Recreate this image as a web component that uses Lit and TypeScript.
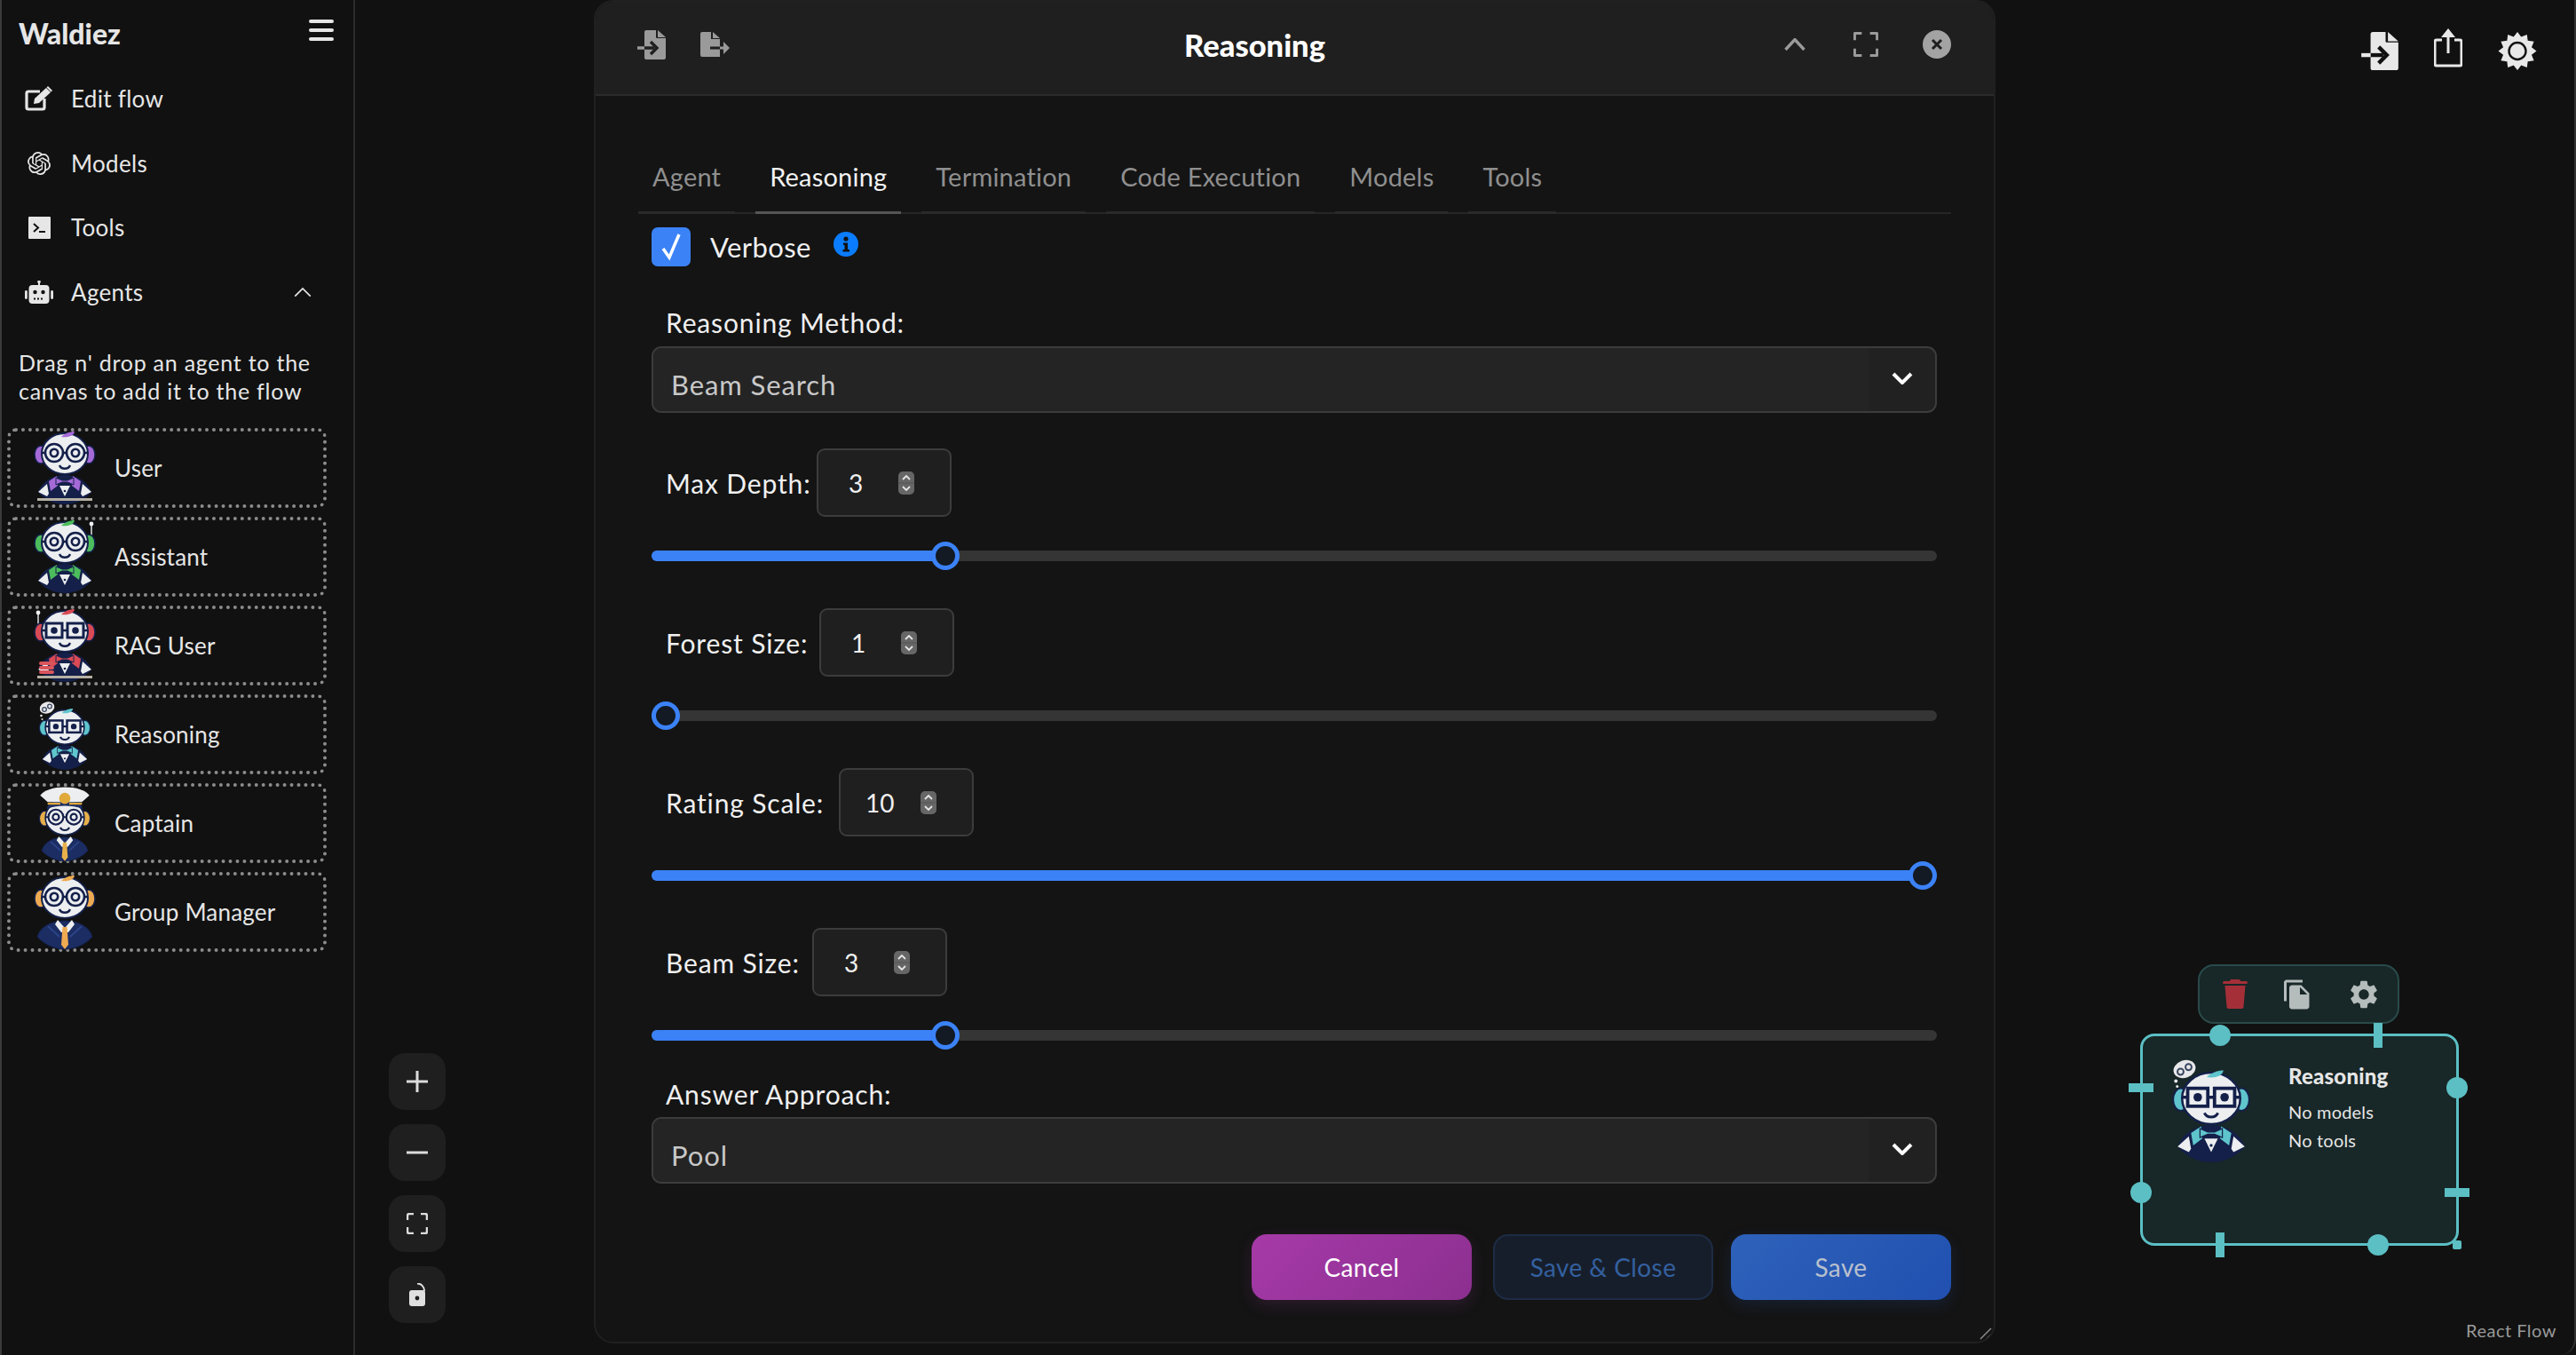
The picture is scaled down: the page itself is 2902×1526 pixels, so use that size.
import { LitElement, html, css, svg } from "lit";
import { customElement } from "lit/decorators.js";

const NAVY = "#14204a";

const gearPath = "M19.14 12.94c.04-.3.06-.61.06-.94 0-.32-.02-.64-.07-.94l2.03-1.58c.18-.14.23-.41.12-.61l-1.92-3.32c-.12-.22-.37-.29-.59-.22l-2.39.96c-.5-.38-1.03-.7-1.62-.94l-.36-2.54c-.04-.24-.24-.41-.48-.41h-3.84c-.24 0-.43.17-.47.41l-.36 2.54c-.59.24-1.13.57-1.62.94l-2.39-.96c-.22-.08-.47 0-.59.22L2.74 8.87c-.12.21-.08.47.12.61l2.03 1.58c-.05.3-.09.63-.09.94s.02.64.07.94l-2.03 1.58c-.18.14-.23.41-.12.61l1.92 3.32c.12.22.37.29.59.22l2.39-.96c.5.38 1.03.7 1.62.94l.36 2.54c.05.24.24.41.48.41h3.84c.24 0 .44-.17.47-.41l.36-2.54c.59-.24 1.13-.56 1.62-.94l2.39.96c.22.08.47 0 .59-.22l1.92-3.32c.12-.22.07-.47-.12-.61l-2.01-1.58zM12 15.6c-1.98 0-3.6-1.62-3.6-3.6s1.62-3.6 3.6-3.6 3.6 1.62 3.6 3.6-1.62 3.6-3.6 3.6z";
const openaiPath = "M22.2819 9.8211a5.9847 5.9847 0 0 0-.5157-4.9108 6.0462 6.0462 0 0 0-6.5098-2.9A6.0651 6.0651 0 0 0 4.9807 4.1818a5.9847 5.9847 0 0 0-3.9977 2.9 6.0462 6.0462 0 0 0 .7427 7.0966 5.98 5.98 0 0 0 .511 4.9107 6.051 6.051 0 0 0 6.5146 2.9001A5.9847 5.9847 0 0 0 13.2599 24a6.0557 6.0557 0 0 0 5.7718-4.2058 5.9894 5.9894 0 0 0 3.9977-2.9001 6.0557 6.0557 0 0 0-.7475-7.0729zm-9.022 12.6081a4.4755 4.4755 0 0 1-2.8764-1.0408l.1419-.0804 4.7783-2.7582a.7948.7948 0 0 0 .3927-.6813v-6.7369l2.02 1.1686a.071.071 0 0 1 .038.052v5.5826a4.504 4.504 0 0 1-4.4945 4.4944zm-9.6607-4.1254a4.4708 4.4708 0 0 1-.5346-3.0137l.142.0852 4.783 2.7582a.7712.7712 0 0 0 .7806 0l5.8428-3.3685v2.3324a.0804.0804 0 0 1-.0332.0615L9.74 19.9502a4.4992 4.4992 0 0 1-6.1408-1.6464zM2.3408 7.8956a4.485 4.485 0 0 1 2.3655-1.9728V11.6a.7664.7664 0 0 0 .3879.6765l5.8144 3.3543-2.0201 1.1685a.0757.0757 0 0 1-.071 0l-4.8303-2.7865A4.504 4.504 0 0 1 2.3408 7.872zm16.5963 3.8558L13.1038 8.364 15.1192 7.2a.0757.0757 0 0 1 .071 0l4.8303 2.7913a4.4944 4.4944 0 0 1-.6765 8.1042v-5.6772a.79.79 0 0 0-.407-.667zm2.0107-3.0231l-.142-.0852-4.7735-2.7818a.7759.7759 0 0 0-.7854 0L9.409 9.2297V6.8974a.0662.0662 0 0 1 .0284-.0615l4.8303-2.7866a4.4992 4.4992 0 0 1 6.6802 4.66zM8.3065 12.863l-2.02-1.1638a.0804.0804 0 0 1-.038-.0567V6.0742a4.4992 4.4992 0 0 1 7.3757-3.4537l-.142.0805L8.704 5.459a.7948.7948 0 0 0-.3927.6813zm1.0976-2.3654l2.602-1.4998 2.6069 1.4998v2.9994l-2.5974 1.4997-2.6067-1.4997Z";

// file with an arrow coming in from the left
const fileIn = (w: number, h: number, c: string, bg: string) => html`
  <svg width=${w} height=${h} viewBox="0 0 32 33">
    <path d="M8 2a2 2 0 0 1 2-2h11v8a1 1 0 0 0 1 1h10v22a2 2 0 0 1-2 2H10a2 2 0 0 1-2-2z" fill=${c} />
    <path d="M23 0l9 8h-9z" fill=${c} />
    <path d="M8 20h11" stroke=${bg} stroke-width="3.4" />
    <path d="M0 20h8" stroke=${c} stroke-width="3.4" />
    <path d="M15 13l7 7-7 7" fill="none" stroke=${bg} stroke-width="3.4" />
  </svg>`;

const fileOut = (c: string, bg: string) => html`
  <svg width="33" height="28" viewBox="0 0 33 28">
    <path d="M0 2a2 2 0 0 1 2-2h10v8h10v20H2a2 2 0 0 1-2-2z" fill=${c} />
    <path d="M14 0l8 7h-8z" fill=${c} />
    <path d="M11 18h11" stroke=${bg} stroke-width="3" />
    <path d="M22 18h7" stroke=${c} stroke-width="3" />
    <path d="M26 11l7 7-7 7z" fill=${c} />
  </svg>`;

const corners = (s: number, c: string, sw: number) => html`
  <svg width=${s} height=${s} viewBox="0 0 24 24" fill="none" stroke=${c} stroke-width=${sw}>
    <path d="M1 8V3a2 2 0 0 1 2-2h5M16 1h5a2 2 0 0 1 2 2v5M23 16v5a2 2 0 0 1-2 2h-5M8 23H3a2 2 0 0 1-2-2v-5" />
  </svg>`;

const chevron = (w: number, h: number, path: string, c: string, sw: number) => html`
  <svg width=${w} height=${h} viewBox="0 0 24 14" fill="none" stroke=${c} stroke-width=${sw}>
    <path d=${path} />
  </svg>`;

function sunIcon() {
  const pts: string[] = [];
  for (let i = 0; i < 24; i++) {
    const r = i % 2 === 0 ? 21.5 : 16.5;
    const a = (i * Math.PI) / 12;
    pts.push(`${22 + r * Math.sin(a)},${21.5 - r * Math.cos(a)}`);
  }
  return html`<svg width="44" height="43" viewBox="0 0 44 43">
    <polygon points=${pts.join(" ")} fill="#e8e8e8" />
    <circle cx="22" cy="21.5" r="9.5" fill="#e8e8e8" stroke="#111" stroke-width="2.4" />
  </svg>`;
}

interface AvatarOpts {
  ear: string;
  square?: boolean;
  antenna?: "left" | "right";
  bubble?: boolean;
  hat?: boolean;
  suit?: boolean;
  bar?: boolean;
  db?: boolean;
  small?: boolean;
}

// little robot mascot, 80 units square
function avatar(o: AvatarOpts, size = 80) {
  const s = o.small ? 0.84 : 1;
  const cy = o.hat ? 34 : o.small ? 32 : 24;
  const face = "#eceef0";
  const glasses = o.square
    ? svg`<path d="M-26 -1h52" stroke=${NAVY} stroke-width="2.6" />
          <rect x="-21" y="-9" width="18" height="16" fill=${face} stroke=${NAVY} stroke-width="3" />
          <rect x="3" y="-9" width="18" height="16" fill=${face} stroke=${NAVY} stroke-width="3" />
          <circle cx="-12" cy="-1" r="3.8" fill=${NAVY} /><circle cx="12" cy="-1" r="3.8" fill=${NAVY} />`
    : svg`<path d="M-26 -1h52" stroke=${NAVY} stroke-width="2.4" />
          <circle cx="-12" cy="-1" r="10" fill=${face} stroke=${NAVY} stroke-width="2.6" />
          <circle cx="12" cy="-1" r="10" fill=${face} stroke=${NAVY} stroke-width="2.6" />
          <circle cx="-12" cy="-1" r="4.2" fill=${face} stroke=${NAVY} stroke-width="2.6" />
          <circle cx="12" cy="-1" r="4.2" fill=${face} stroke=${NAVY} stroke-width="2.6" />`;
  const body = o.suit
    ? svg`<path d="M-31 44c3-11 15-18 31-18s28 7 31 18c-8 9-20 14-31 14s-23-5-31-14z" fill="#1b2d63" stroke=${NAVY} stroke-width="1" />
          <path d="M-19 32l13 12M19 32l-13 12" stroke="#2c4488" stroke-width="2" />
          <path d="M-8 25l8 9 8-9 3 5-7 9h-8l-7-9z" fill=${face} />
          <path d="M-2.500 33h5l1.500 20-4 5-4-5z" fill=${o.ear} />`
    : svg`<path d="M-30 43c4-11 15-19 30-19s26 8 30 19c-7 9-18 14-30 14s-23-5-30-14z" fill=${NAVY} />
          <path d="M-30 43l10-9 2 11-2 3z" fill=${face} />
          <path d="M30 43l-10-9-2 11 2 3z" fill=${face} />
          <path d="M-18 31l9-6 1 11-8 6zM18 31l-9-6-1 11 8 6z" fill=${o.ear} />
          <path d="M-6 36h12l-6 12z" fill=${face} />
          <circle cx="0" cy="42" r="1.300" fill=${NAVY} />
          <path d="M-10 27l7 3h6l7-3v8l-7-3h-6l-7 3z" fill=${o.ear} stroke=${NAVY} stroke-width="1" />`;
  return html`<svg class="avatar" width=${size} height=${size} viewBox="0 0 80 80">
    ${o.bubble
      ? svg`<g fill="#e8e8ea"><ellipse cx="20" cy="10" rx="8.500" ry="6.500" transform="rotate(-20 20 10)" />
          <circle cx="13.500" cy="19" r="1.300" /><circle cx="14.500" cy="23" r="1" /></g>
          <g fill="none" stroke="#39465f" stroke-width="1.300"><circle cx="17" cy="12" r="2.300" /><circle cx="23" cy="8.500" r="2.300" /></g>`
      : ""}
    <g transform="translate(40 ${cy}) scale(${s})">
      ${o.antenna
        ? svg`<path d="M${o.antenna === "left" ? -30 : 30} -6v-13" stroke="#eef0f2" stroke-width="1.400" />
              <circle cx=${o.antenna === "left" ? -30 : 30} cy="-21" r="2.400" fill="#eef0f2" />`
        : ""}
      ${body}
      <ellipse cx="-27" cy="1" rx="7" ry="10" fill=${o.ear} stroke=${NAVY} stroke-width="1.500" />
      <ellipse cx="27" cy="1" rx="7" ry="10" fill=${o.ear} stroke=${NAVY} stroke-width="1.500" />
      <ellipse cx="0" cy="0" rx="26" ry="23" fill=${face} stroke=${NAVY} stroke-width="2" />
      <path d="M-4 -19c4-4 10-6 15-6-1 5-7 7-15 6z" fill=${o.ear} />
      ${glasses}
      <path d="M-6 13c2 5 10 5 12 0" fill="none" stroke=${NAVY} stroke-width="2.400" />
      ${o.hat
        ? svg`<path d="M-24 -12c0-8 11-11 24-11s24 3 24 11c-8-3-16-4-24-4s-16 1-24 4z" fill="#1b2d63" />
              <path d="M-33 -30c5-7 18-11 33-11s28 4 33 11l-10 9h-46z" fill=${face} />
              <path d="M-23 -19h17M6 -19h17" stroke="#e0a93a" stroke-width="2.600" />
              <circle cx="0" cy="-26" r="7.500" fill="#e0a93a" />`
        : ""}
    </g>
    ${o.bar ? svg`<rect x="9" y="74" width="62" height="3" fill="#b5b0a4" />` : ""}
    ${o.db
      ? svg`<g fill="#d9555c"><rect x="11" y="58" width="17" height="4" rx="2" /><rect x="11" y="63" width="17" height="4" rx="2" /><rect x="11" y="68" width="17" height="4" rx="2" /></g>`
      : ""}
  </svg>`;
}

const reasoningAvatar: AvatarOpts = { ear: "#5fc5cc", square: true, bubble: true, small: true };

const agents: { name: string; opts: AvatarOpts }[] = [
  { name: "User", opts: { ear: "#a56ad8", bar: true } },
  { name: "Assistant", opts: { ear: "#4cbc5c", antenna: "right" } },
  { name: "RAG User", opts: { ear: "#d94a55", square: true, antenna: "left", bar: true, db: true } },
  { name: "Reasoning", opts: reasoningAvatar },
  { name: "Captain", opts: { ear: "#e8b04a", hat: true, suit: true, small: true } },
  { name: "Group Manager", opts: { ear: "#eeaa50", suit: true } },
];

const navIcons = [
  {
    label: "Edit flow",
    icon: html`<svg width="32" height="28" viewBox="0 0 32 28">
      <path d="M17 6H4a2 2 0 0 0-2 2v16a2 2 0 0 0 2 2h16a2 2 0 0 0 2-2V14" fill="none" stroke="#e6e6e6" stroke-width="3.200" />
      <path d="M10 20l1-6L24 2l5 5-13 12z" fill="#e6e6e6" />
      <path d="M26 0l5 5-1.500 1.500-5-5z" fill="#e6e6e6" />
    </svg>`,
  },
  {
    label: "Models",
    icon: html`<svg width="26" height="26" viewBox="0 0 24 24" fill="#e6e6e6"><path d=${openaiPath} /></svg>`,
  },
  {
    label: "Tools",
    icon: html`<svg width="25" height="25" viewBox="0 0 25 25">
      <rect width="25" height="25" rx="1" fill="#e6e6e6" />
      <path d="M6 8l5 4.500-5 4.500" fill="none" stroke="#111" stroke-width="2" />
      <path d="M12 17h7" stroke="#111" stroke-width="2" />
    </svg>`,
  },
];

const sliders = [
  { label: "Max Depth:", value: 3, labelWidth: 186 },
  { label: "Forest Size:", value: 1, labelWidth: 189 },
  { label: "Rating Scale:", value: 10, labelWidth: 211 },
  { label: "Beam Size:", value: 3, labelWidth: 181 },
];

const tabs = ["Agent", "Reasoning", "Termination", "Code Execution", "Models", "Tools"];

@customElement("app-root")
export class AppRoot extends LitElement {
  static styles = css`
    :host {
      display: block;
      width: 100%;
      height: 1526px;
      overflow: hidden;
      font-family: Lato, "Noto Sans", sans-serif;
      color: #e6e6e6;
      background: #111;
    }
    .app {
      display: grid;
      grid-template-columns: 398px 1fr;
      height: 1526px;
      box-sizing: border-box;
      border-left: 2px solid #3a3a3a;
      border-right: 2px solid #333;
      border-bottom-right-radius: 18px;
      background: #111;
    }

    /* sidebar */
    .sidebar {
      display: flex;
      flex-direction: column;
      border-right: 2px solid #2c2c2c;
    }
    .brand {
      display: flex;
      justify-content: space-between;
      align-items: flex-start;
      height: 75px;
      padding: 0 22px 0 19px;
    }
    .brand h1 {
      margin: 20px 0 0;
      font-size: 32px;
      font-weight: 900;
      line-height: 36px;
    }
    .burger {
      display: flex;
      flex-direction: column;
      gap: 6px;
      margin-top: 22px;
      width: 28px;
    }
    .burger i {
      height: 4px;
      border-radius: 2px;
      background: #e6e6e6;
    }
    .nav {
      display: grid;
      grid-auto-rows: 72.6px;
    }
    .nav-row {
      display: grid;
      grid-template-columns: 32px 1fr;
      column-gap: 20px;
      align-items: center;
      justify-items: center;
      padding: 0 47px 0 26px;
      font-size: 26px;
    }
    .nav-row span {
      justify-self: start;
      letter-spacing: 0.3px;
    }
    .agents-row {
      display: flex;
      justify-content: space-between;
      align-items: center;
      width: 100%;
    }
    .hint {
      margin: 27px 0 26px;
      padding: 0 6px 0 19px;
      font-size: 25px;
      line-height: 32px;
      letter-spacing: 0.75px;
    }
    .cards {
      display: flex;
      flex-direction: column;
      gap: 10px;
      padding-left: 6px;
    }
    .card {
      display: flex;
      align-items: center;
      width: 360px;
      height: 90px;
      box-sizing: border-box;
      padding-left: 21px;
      gap: 16px;
      border: 4px dotted #8c8c8c;
      border-radius: 10px;
      font-size: 26px;
      letter-spacing: 0.2px;
    }
    .avatar {
      flex: none;
      overflow: visible;
    }

    /* canvas */
    .canvas {
      position: relative;
    }
    .controls {
      position: absolute;
      left: 38px;
      top: 1186px;
      display: flex;
      flex-direction: column;
      gap: 16px;
    }
    .control {
      display: flex;
      align-items: center;
      justify-content: center;
      width: 64px;
      height: 64px;
      border-radius: 18px;
      background: #1f1f1f;
    }
    .page-actions {
      position: absolute;
      top: 32px;
      right: 42px;
      display: flex;
      align-items: flex-start;
      gap: 40px;
    }
    .page-actions > svg:first-child,
    .page-actions > svg:last-child {
      margin-top: 4px;
    }
    .attribution {
      position: absolute;
      right: 20px;
      top: 1486px;
      font-size: 20px;
      line-height: 24px;
      color: #999;
      letter-spacing: 0.5px;
    }

    /* modal */
    .modal {
      position: absolute;
      left: 269px;
      top: 0;
      width: 1579px;
      height: 1513px;
      box-sizing: border-box;
      display: flex;
      flex-direction: column;
      border: 2px solid #202020;
      border-radius: 22px;
      background: #141414;
      overflow: hidden;
    }
    .modal-head {
      flex: none;
      display: grid;
      grid-template-columns: 616px auto 1fr;
      align-items: center;
      height: 106px;
      padding: 0 48px 8px 47px;
      box-sizing: border-box;
      background: #1f1f1f;
      border-bottom: 2px solid #2c2c2c;
    }
    .head-left {
      display: flex;
      align-items: center;
      gap: 39px;
    }
    .head-right {
      display: flex;
      justify-content: flex-end;
      align-items: center;
      gap: 50px;
    }
    .head-right > svg:first-child {
      margin-right: 4px;
    }
    .modal-head h2 {
      margin: 0;
      font-size: 34.5px;
      font-weight: 900;
      color: #fff;
    }
    .close {
      display: flex;
      align-items: center;
      justify-content: center;
      width: 32px;
      height: 32px;
      border-radius: 50%;
      background: #a3a3a3;
    }
    .modal-body {
      display: flex;
      flex-direction: column;
      padding: 0 48px;
    }
    .tabs {
      display: flex;
      gap: 23px;
      margin-top: 70px;
      border-bottom: 2px solid #262626;
    }
    .tab {
      padding: 0 16px;
      height: 63px;
      box-sizing: border-box;
      font-size: 29px;
      line-height: 42px;
      color: #8f8f8f;
      border-bottom: 3px solid #2a2a2a;
      margin-bottom: -2px;
      letter-spacing: 0.2px;
    }
    .tab.active {
      color: #f2f2f2;
      border-bottom-color: #555;
    }
    .form {
      display: flex;
      flex-direction: column;
      padding: 0 16px 0 15px;
    }
    .verbose {
      display: flex;
      align-items: center;
      height: 44px;
      margin-top: 15px;
      font-size: 31px;
      letter-spacing: 0.4px;
      color: #f0f0f0;
    }
    .check {
      display: flex;
      align-items: center;
      justify-content: center;
      width: 44px;
      height: 44px;
      margin-right: 22px;
      border-radius: 7px;
      background: #3b82f6;
    }
    .info {
      margin: -6px 0 0 25px;
    }
    .label {
      padding-left: 16px;
      font-size: 30px;
      line-height: 36px;
      color: #f0f0f0;
      letter-spacing: 0.85px;
    }
    .select {
      display: flex;
      align-items: stretch;
      height: 75px;
      box-sizing: border-box;
      border: 2px solid #3c3c3c;
      border-radius: 11px;
      background: #212121;
      font-size: 31px;
      color: #c8c8c8;
      overflow: hidden;
    }
    .select-value {
      flex: 1;
      display: flex;
      align-items: center;
      padding: 10px 0 0 20px;
      background: #242424;
      letter-spacing: 0.9px;
    }
    .select-arrow {
      flex: none;
      display: flex;
      align-items: center;
      justify-content: center;
      width: 75px;
      padding-bottom: 4px;
    }
    .method-label {
      margin-top: 45px;
      margin-bottom: 9px;
    }
    .answer-label {
      margin-top: 32px;
      margin-bottom: 8px;
    }
    .slider-group {
      margin-top: 43px;
    }
    .slider-group.first {
      margin-top: 40px;
    }
    .number-row {
      display: flex;
      align-items: center;
      height: 77px;
    }
    .number-row .label {
      box-sizing: border-box;
      white-space: nowrap;
    }
    .number {
      display: flex;
      align-items: center;
      justify-content: space-between;
      box-sizing: border-box;
      width: 152px;
      height: 77px;
      padding: 0 40px 0 28px;
      border: 2px solid #3c3c3c;
      border-radius: 9px;
      background: #1f1f1f;
      font-size: 28px;
      color: #f0f0f0;
    }
    .number span {
      width: 28px;
      text-align: center;
    }
    .spinner {
      display: block;
    }
    .slider {
      position: relative;
      display: flex;
      align-items: center;
      height: 32px;
      margin-top: 28px;
    }
    .track {
      flex: 1;
      height: 12px;
      border-radius: 6px;
      background: #353535;
      overflow: hidden;
    }
    .fill {
      height: 100%;
      background: #3b82f6;
    }
    .thumb {
      position: absolute;
      top: 0;
      width: 32px;
      height: 32px;
      box-sizing: border-box;
      border: 5px solid #3b82f6;
      border-radius: 50%;
      background: #131a24;
    }
    .actions {
      display: flex;
      justify-content: flex-end;
      gap: 20px;
      margin-top: 57px;
      margin-right: -16px;
    }
    .btn {
      display: flex;
      align-items: center;
      justify-content: center;
      width: 248px;
      height: 74px;
      box-sizing: border-box;
      border-radius: 17px;
      font-size: 28px;
      letter-spacing: 0.4px;
    }
    .cancel {
      margin-right: 4px;
      background: linear-gradient(135deg, #a63aa8, #8c2f90);
      color: #fff;
      box-shadow: 0 6px 18px rgba(160, 60, 160, 0.18);
    }
    .save-close {
      border: 2px solid #1d2c45;
      background: #171e2b;
      color: #33609f;
    }
    .save {
      background: linear-gradient(135deg, #2e62ba, #2150b0);
      color: #b8c0cd;
      box-shadow: 0 6px 18px rgba(40, 90, 190, 0.18);
    }
    .resize {
      position: absolute;
      right: 2px;
      bottom: 2px;
    }

    /* node */
    .toolbar {
      position: absolute;
      left: 2076px;
      top: 1086px;
      width: 227px;
      height: 67px;
      box-sizing: border-box;
      display: flex;
      align-items: center;
      justify-content: space-between;
      padding: 0 19px 0 26px;
      border: 2px solid #2a4a4a;
      border-radius: 18px;
      background: #182727;
    }
    .node {
      position: absolute;
      left: 2011px;
      top: 1164px;
      width: 359px;
      height: 239px;
      box-sizing: border-box;
      display: flex;
      align-items: flex-start;
      gap: 27px;
      padding: 16px 0 0 17px;
      border: 3px solid #5bbfc4;
      border-radius: 16px;
      background: #182727;
    }
    .node .avatar {
      margin-top: 6px;
    }
    .node-text {
      display: flex;
      flex-direction: column;
      gap: 8px;
      padding-top: 15px;
      font-size: 20px;
      line-height: 24px;
      letter-spacing: 0.2px;
    }
    .node-text b {
      margin-bottom: 6px;
      font-size: 24px;
      font-weight: 900;
      line-height: 28px;
      letter-spacing: 0.2px;
    }
    .dot,
    .tick {
      position: absolute;
      background: #5bbfc4;
    }
    .dot {
      width: 24px;
      height: 24px;
      border-radius: 50%;
    }
    .tick.h {
      width: 28px;
      height: 10px;
    }
    .tick.v {
      width: 10px;
      height: 28px;
    }
    .grip {
      position: absolute;
      width: 10px;
      height: 10px;
      left: 2363px;
      top: 1397px;
      border-radius: 2px;
      background: #5bbfc4;
    }
  `;

  private slider(label: string, value: number, labelWidth: number, first: boolean) {
    const frac = (value - 1) / 9;
    const x = Math.round(frac * 1416);
    return html`<div class="slider-group ${first ? "first" : ""}">
      <div class="number-row">
        <span class="label" style="width:${labelWidth}px">${label}</span>
        <div class="number">
          <span>${value}</span>
          <svg class="spinner" width="18" height="26" viewBox="0 0 18 26">
            <rect width="18" height="26" rx="5" fill="#666" />
            <path d="M0 13h18" stroke="#555" stroke-width="1" />
            <path d="M5 9l4-4 4 4M5 17l4 4 4-4" fill="none" stroke="#e6e6e6" stroke-width="1.800" />
          </svg>
        </div>
      </div>
      <div class="slider">
        <div class="track"><div class="fill" style="width:${x + 16}px"></div></div>
        <div class="thumb" style="left:${x}px"></div>
      </div>
    </div>`;
  }

  private select(value: string) {
    return html`<div class="select">
      <div class="select-value">${value}</div>
      <div class="select-arrow">
        ${chevron(24, 14, "M2 2l10 10 10-10", "#fff", 4)}
      </div>
    </div>`;
  }

  private modal() {
    return html`<section class="modal">
      <header class="modal-head">
        <div class="head-left">
          ${fileIn(32, 33, "#9a9a9a", "#1f1f1f")} ${fileOut("#9a9a9a", "#1f1f1f")}
        </div>
        <h2>Reasoning</h2>
        <div class="head-right">
          ${chevron(24, 14, "M1.500 13L12 1.500 22.500 13", "#9a9a9a", 3.4)} ${corners(28, "#9a9a9a", 3)}
          <span class="close">
            <svg width="14" height="14" viewBox="0 0 14 14"><path d="M2 2l10 10M12 2L2 12" stroke="#1f1f1f" stroke-width="3" /></svg>
          </span>
        </div>
      </header>
      <div class="modal-body">
        <nav class="tabs">
          ${tabs.map((t) => html`<span class="tab ${t === "Reasoning" ? "active" : ""}">${t}</span>`)}
        </nav>
        <div class="form">
          <div class="verbose">
            <span class="check">
              <svg width="24" height="32" viewBox="0 0 24 32"><path d="M3 18l7 10 11-26" fill="none" stroke="#fff" stroke-width="3.500" /></svg>
            </span>
            Verbose
            <svg class="info" width="28" height="28" viewBox="0 0 28 28">
              <circle cx="14" cy="14" r="14" fill="#0a7cff" />
              <circle cx="14" cy="8" r="2.600" fill="#111" />
              <path d="M11 12.500h5v7.500h2v2.500h-7.500V20h2v-5h-1.500z" fill="#111" />
            </svg>
          </div>
          <div class="label method-label">Reasoning Method:</div>
          ${this.select("Beam Search")}
          ${sliders.map((s, i) => this.slider(s.label, s.value, s.labelWidth, i === 0))}
          <div class="label answer-label">Answer Approach:</div>
          ${this.select("Pool")}
          <div class="actions">
            <div class="btn cancel">Cancel</div>
            <div class="btn save-close">Save &amp; Close</div>
            <div class="btn save">Save</div>
          </div>
        </div>
      </div>
      <svg class="resize" width="14" height="14" viewBox="0 0 14 14">
        <path d="M1 13L13 1M8 13l5-5" stroke="#8a8a8a" stroke-width="1.500" />
      </svg>
    </section>`;
  }

  private node() {
    const handles = [
      ["dot", 2089, 1154],
      ["tick v", 2274, 1152],
      ["tick h", 1998, 1220],
      ["dot", 2356, 1213],
      ["dot", 2000, 1331],
      ["tick h", 2354, 1338],
      ["tick v", 2096, 1388],
      ["dot", 2267, 1390],
    ] as const;
    return html`
      <div class="toolbar">
        <svg width="28" height="33" viewBox="0 0 28 33" fill="#a52f38">
          <rect y="2" width="28" height="3" rx="1.500" />
          <rect x="8" width="12" height="4" rx="2" />
          <path d="M2.500 7h23l-2 24a2 2 0 0 1-2 2H6.500a2 2 0 0 1-2-2z" />
        </svg>
        <svg width="36" height="36" viewBox="0 0 24 24" fill="#b5bcbc"><path d="M16 1H4c-1.100 0-2 .9-2 2v14h2V3h12V1zm-1 4l6 6v10c0 1.100-.9 2-2 2H7.990C6.890 23 6 22.100 6 21l.01-14c0-1.100.89-2 1.990-2h7zm-1 7h5.500L14 6.500V12z" /></svg>
        <svg width="38" height="38" viewBox="0 0 24 24" fill="#b5bcbc"><path d=${gearPath} /></svg>
      </div>
      <div class="node">
        ${avatar(reasoningAvatar, 120)}
        <div class="node-text">
          <b>Reasoning</b>
          <span>No models</span>
          <span>No tools</span>
        </div>
      </div>
      ${handles.map(([cls, x, y]) => html`<div class=${cls} style="left:${x}px;top:${y}px"></div>`)}
      <div class="grip"></div>
    `;
  }

  render() {
    return html`<div class="app">
      <aside class="sidebar">
        <div class="brand">
          <h1>Waldiez</h1>
          <div class="burger"><i></i><i></i><i></i></div>
        </div>
        <div class="nav">
          ${navIcons.map((n) => html`<div class="nav-row">${n.icon}<span>${n.label}</span></div>`)}
          <div class="nav-row">
            <svg width="32" height="26" viewBox="0 0 32 26" fill="#e6e6e6">
              <rect x="15" y="0" width="2" height="6" />
              <circle cx="16" cy="1.500" r="1.800" />
              <rect x="4.500" y="5" width="23" height="21" rx="4" />
              <rect x="0" y="11" width="2.800" height="10" rx="1.400" />
              <rect x="29.200" y="11" width="2.800" height="10" rx="1.400" />
              <circle cx="11.500" cy="13" r="2.200" fill="#111" />
              <circle cx="20.500" cy="13" r="2.200" fill="#111" />
              <path d="M10 20.500h12" stroke="#111" stroke-width="2" stroke-dasharray="2 2" />
            </svg>
            <div class="agents-row">
              <span>Agents</span>
              ${chevron(20, 12, "M1.500 12.500L12 2l10.500 10.500", "#e6e6e6", 2)}
            </div>
          </div>
        </div>
        <p class="hint">Drag n' drop an agent to the canvas to add it to the flow</p>
        <div class="cards">
          ${agents.map((a) => html`<div class="card">${avatar(a.opts)}<span>${a.name}</span></div>`)}
        </div>
      </aside>
      <main class="canvas">
        <div class="controls">
          <div class="control">
            <svg width="24" height="24" viewBox="0 0 24 24"><path d="M12 0v24M0 12h24" stroke="#dcdcdc" stroke-width="3" /></svg>
          </div>
          <div class="control">
            <svg width="24" height="4" viewBox="0 0 24 4"><path d="M0 2h24" stroke="#dcdcdc" stroke-width="3" /></svg>
          </div>
          <div class="control">${corners(24, "#dcdcdc", 2.5)}</div>
          <div class="control">
            <svg width="20" height="26" viewBox="0 0 20 26" fill="#e0e0e0">
              <path d="M10 .500a8 8 0 0 1 8 8V9" fill="none" stroke="#e0e0e0" stroke-width="2" />
              <rect x="1" y="8" width="18" height="18" rx="3" />
              <circle cx="10" cy="17" r="2.400" fill="#1f1f1f" />
            </svg>
          </div>
        </div>
        <div class="page-actions">
          ${fileIn(42, 43, "#e8e8e8", "#111")}
          <svg width="32" height="44" viewBox="0 0 32 44" fill="none">
            <path d="M9 13H3a2 2 0 0 0-2 2v25a2 2 0 0 0 2 2h26a2 2 0 0 0 2-2V15a2 2 0 0 0-2-2h-6" stroke="#e8e8e8" stroke-width="3" />
            <path d="M16 28V6" stroke="#e8e8e8" stroke-width="3" />
            <path d="M16 0l8 10H8z" fill="#e8e8e8" />
          </svg>
          ${sunIcon()}
        </div>
        ${this.node()}
        ${this.modal()}
        <div class="attribution">React Flow</div>
      </main>
    </div>`;
  }
}
